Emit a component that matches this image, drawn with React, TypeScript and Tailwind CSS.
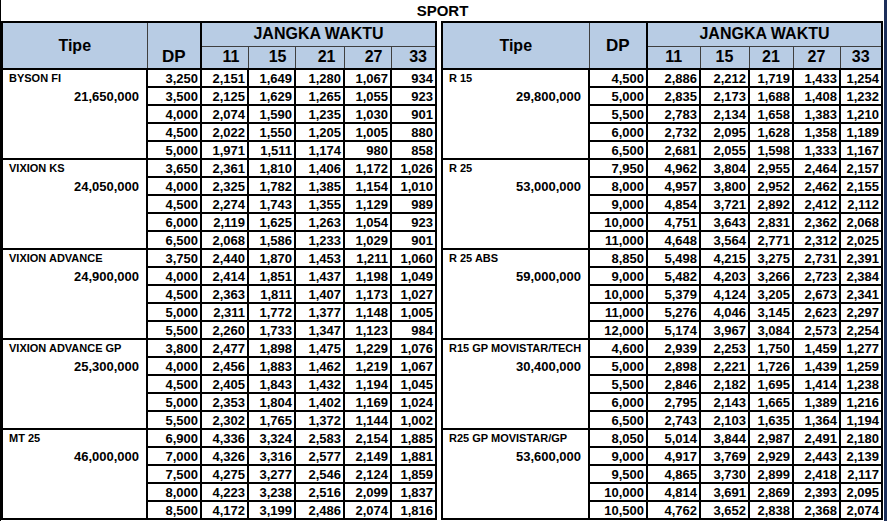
type Group = { name: string; price: string; rows: string[][] }

const leftGroups: Group[] = [
  {
    name: "BYSON FI",
    price: "21,650,000",
    rows: [
      ["3,250", "2,151", "1,649", "1,280", "1,067", "934"],
      ["3,500", "2,125", "1,629", "1,265", "1,055", "923"],
      ["4,000", "2,074", "1,590", "1,235", "1,030", "901"],
      ["4,500", "2,022", "1,550", "1,205", "1,005", "880"],
      ["5,000", "1,971", "1,511", "1,174", "980", "858"],
    ],
  },
  {
    name: "VIXION KS",
    price: "24,050,000",
    rows: [
      ["3,650", "2,361", "1,810", "1,406", "1,172", "1,026"],
      ["4,000", "2,325", "1,782", "1,385", "1,154", "1,010"],
      ["4,500", "2,274", "1,743", "1,355", "1,129", "989"],
      ["6,000", "2,119", "1,625", "1,263", "1,054", "923"],
      ["6,500", "2,068", "1,586", "1,233", "1,029", "901"],
    ],
  },
  {
    name: "VIXION ADVANCE",
    price: "24,900,000",
    rows: [
      ["3,750", "2,440", "1,870", "1,453", "1,211", "1,060"],
      ["4,000", "2,414", "1,851", "1,437", "1,198", "1,049"],
      ["4,500", "2,363", "1,811", "1,407", "1,173", "1,027"],
      ["5,000", "2,311", "1,772", "1,377", "1,148", "1,005"],
      ["5,500", "2,260", "1,733", "1,347", "1,123", "984"],
    ],
  },
  {
    name: "VIXION ADVANCE GP",
    price: "25,300,000",
    rows: [
      ["3,800", "2,477", "1,898", "1,475", "1,229", "1,076"],
      ["4,000", "2,456", "1,883", "1,462", "1,219", "1,067"],
      ["4,500", "2,405", "1,843", "1,432", "1,194", "1,045"],
      ["5,000", "2,353", "1,804", "1,402", "1,169", "1,024"],
      ["5,500", "2,302", "1,765", "1,372", "1,144", "1,002"],
    ],
  },
  {
    name: "MT 25",
    price: "46,000,000",
    rows: [
      ["6,900", "4,336", "3,324", "2,583", "2,154", "1,885"],
      ["7,000", "4,326", "3,316", "2,577", "2,149", "1,881"],
      ["7,500", "4,275", "3,277", "2,546", "2,124", "1,859"],
      ["8,000", "4,223", "3,238", "2,516", "2,099", "1,837"],
      ["8,500", "4,172", "3,199", "2,486", "2,074", "1,816"],
    ],
  },
]

const rightGroups: Group[] = [
  {
    name: "R 15",
    price: "29,800,000",
    rows: [
      ["4,500", "2,886", "2,212", "1,719", "1,433", "1,254"],
      ["5,000", "2,835", "2,173", "1,688", "1,408", "1,232"],
      ["5,500", "2,783", "2,134", "1,658", "1,383", "1,210"],
      ["6,000", "2,732", "2,095", "1,628", "1,358", "1,189"],
      ["6,500", "2,681", "2,055", "1,598", "1,333", "1,167"],
    ],
  },
  {
    name: "R 25",
    price: "53,000,000",
    rows: [
      ["7,950", "4,962", "3,804", "2,955", "2,464", "2,157"],
      ["8,000", "4,957", "3,800", "2,952", "2,462", "2,155"],
      ["9,000", "4,854", "3,721", "2,892", "2,412", "2,112"],
      ["10,000", "4,751", "3,643", "2,831", "2,362", "2,068"],
      ["11,000", "4,648", "3,564", "2,771", "2,312", "2,025"],
    ],
  },
  {
    name: "R 25 ABS",
    price: "59,000,000",
    rows: [
      ["8,850", "5,498", "4,215", "3,275", "2,731", "2,391"],
      ["9,000", "5,482", "4,203", "3,266", "2,723", "2,384"],
      ["10,000", "5,379", "4,124", "3,205", "2,673", "2,341"],
      ["11,000", "5,276", "4,046", "3,145", "2,623", "2,297"],
      ["12,000", "5,174", "3,967", "3,084", "2,573", "2,254"],
    ],
  },
  {
    name: "R15 GP MOVISTAR/TECH",
    price: "30,400,000",
    rows: [
      ["4,600", "2,939", "2,253", "1,750", "1,459", "1,277"],
      ["5,000", "2,898", "2,221", "1,726", "1,439", "1,259"],
      ["5,500", "2,846", "2,182", "1,695", "1,414", "1,238"],
      ["6,000", "2,795", "2,143", "1,665", "1,389", "1,216"],
      ["6,500", "2,743", "2,103", "1,635", "1,364", "1,194"],
    ],
  },
  {
    name: "R25 GP MOVISTAR/GP",
    price: "53,600,000",
    rows: [
      ["8,050", "5,014", "3,844", "2,987", "2,491", "2,180"],
      ["9,000", "4,917", "3,769", "2,929", "2,443", "2,139"],
      ["9,500", "4,865", "3,730", "2,899", "2,418", "2,117"],
      ["10,000", "4,814", "3,691", "2,869", "2,393", "2,095"],
      ["10,500", "4,762", "3,652", "2,838", "2,368", "2,074"],
    ],
  },
]

const months = ["11", "15", "21", "27", "33"]

const PriceSheet = ({ groups, cols, side }: { groups: Group[]; cols: string[]; side: "left" | "right" }) => {
  const monthAlign = side === "left" ? "text-right pr-2" : "text-center"
  const dpAlign = side === "left" ? "align-bottom pb-[3px]" : "align-middle"

  return (
    <table className="table-fixed border-collapse border-2 border-black">
      <colgroup>
        {cols.map((w, i) => (
          <col key={i} className={w} />
        ))}
      </colgroup>
      <thead className="bg-[#b8cce4]">
        <tr className="h-[24px]">
          <th rowSpan={2} className="border border-[#3f3f3f] p-0 text-[16px] font-bold leading-none">
            Tipe
          </th>
          <th
            rowSpan={2}
            className={`border border-[#3f3f3f] border-r-2 border-r-black p-0 text-[17px] font-bold leading-none ${dpAlign}`}
          >
            DP
          </th>
          <th colSpan={5} className="border border-[#3f3f3f] p-0 text-[16px] font-bold leading-none">
            JANGKA WAKTU
          </th>
        </tr>
        <tr className="h-[23px]">
          {months.map((m) => (
            <th key={m} className={`border border-[#3f3f3f] p-0 text-[16px] font-bold leading-none ${monthAlign}`}>
              {m}
            </th>
          ))}
        </tr>
      </thead>
      <tbody>
        {groups.map((g) =>
          g.rows.map((r, ri) => (
            <tr key={g.name + ri} className="h-[18px]">
              {ri === 0 && (
                <td rowSpan={5} className="border-2 border-black p-0 align-top">
                  <div className="flex h-[17px] items-center pl-[6px] text-[11px] font-bold leading-none">{g.name}</div>
                  <div className="flex h-[18px] items-center justify-end pr-[7px] text-[13px] font-bold leading-none">
                    {g.price}
                  </div>
                </td>
              )}
              {r.map((v, vi) => (
                <td key={vi} className="border-2 border-black p-0 pr-[2px] text-right text-[13px] font-bold leading-none">
                  {v}
                </td>
              ))}
            </tr>
          ))
        )}
      </tbody>
    </table>
  )
}

export default function App() {
  return (
    <div className="flex h-[521px] w-[887px] overflow-hidden bg-white text-black" style={{ fontFamily: '"Liberation Sans", Arial, sans-serif' }}>
      <div className="flex w-[884px] flex-col border-l border-black">
        <div className="h-[21px] pt-[2px] text-center text-[15px] font-bold leading-[17px]">SPORT</div>
        <div className="flex gap-[4px]">
          <PriceSheet
            side="left"
            groups={leftGroups}
            cols={["w-[145px]", "w-[54px]", "w-[47px]", "w-[47px]", "w-[49px]", "w-[47px]", "w-[45px]"]}
          />
          <PriceSheet
            side="right"
            groups={rightGroups}
            cols={["w-[147px]", "w-[58px]", "w-[53px]", "w-[49px]", "w-[44px]", "w-[47px]", "w-[42px]"]}
          />
        </div>
      </div>
      <div className="h-full w-[3px] bg-[#1c2f5a]" />
    </div>
  )
}
